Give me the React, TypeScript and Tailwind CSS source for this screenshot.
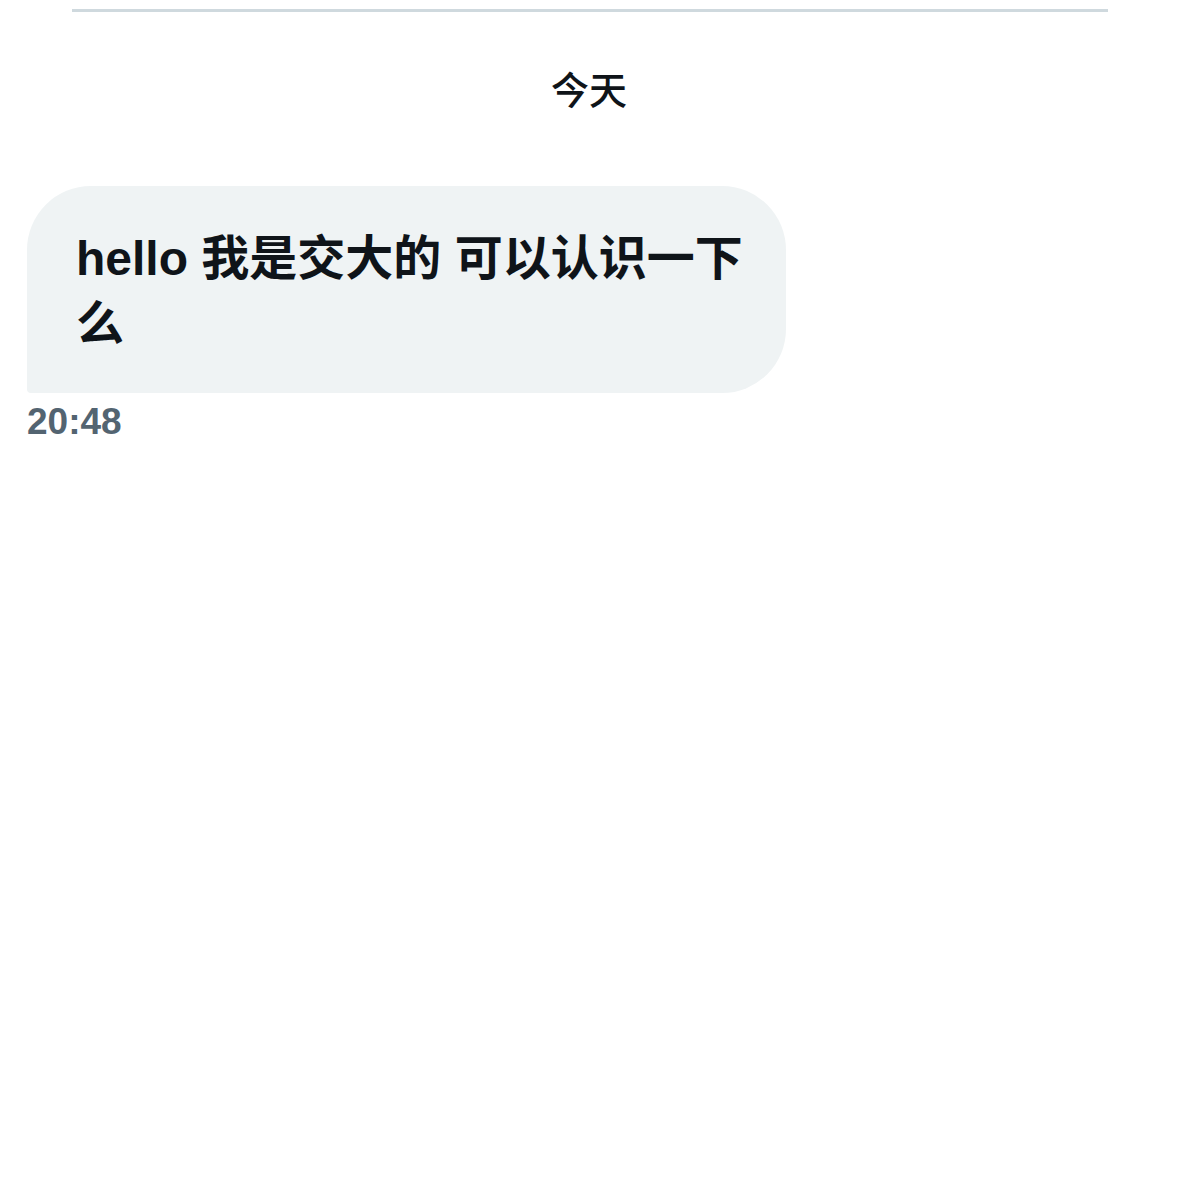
export default function App() {
  return (
    <div className="w-full h-[1178px] bg-white overflow-hidden" style={{}}>
      {/* top divider */}
      <div className="ml-[72px] mr-[70px] mt-[9px] h-[3px] bg-[#cfd9de]" />

      {/* day label */}
      <div className="mt-[55px] text-center text-[38px] leading-[48px] font-medium text-[#0f1419] font-['Liberation_Sans','Noto_Sans_CJK_SC',sans-serif]">
        今天
      </div>

      {/* message */}
      <div className="mt-[71px] ml-[27px] flex flex-col items-start">
        <div className="w-[759px] bg-[#eff3f4] rounded-[64px] rounded-bl-[4px] pl-[49px] pr-[40px] pt-[40px] pb-[37px]">
          <p className="text-[48px] leading-[65px] font-bold text-[#0f1419] font-['Liberation_Sans','Noto_Sans_CJK_SC',sans-serif]">
            hello 我是交大的 可以认识一下么
          </p>
        </div>
        <span className="mt-[10px] text-[37px] leading-[37px] font-bold text-[#536471] font-['Liberation_Sans',sans-serif]">
          20:48
        </span>
      </div>
    </div>
  );
}
